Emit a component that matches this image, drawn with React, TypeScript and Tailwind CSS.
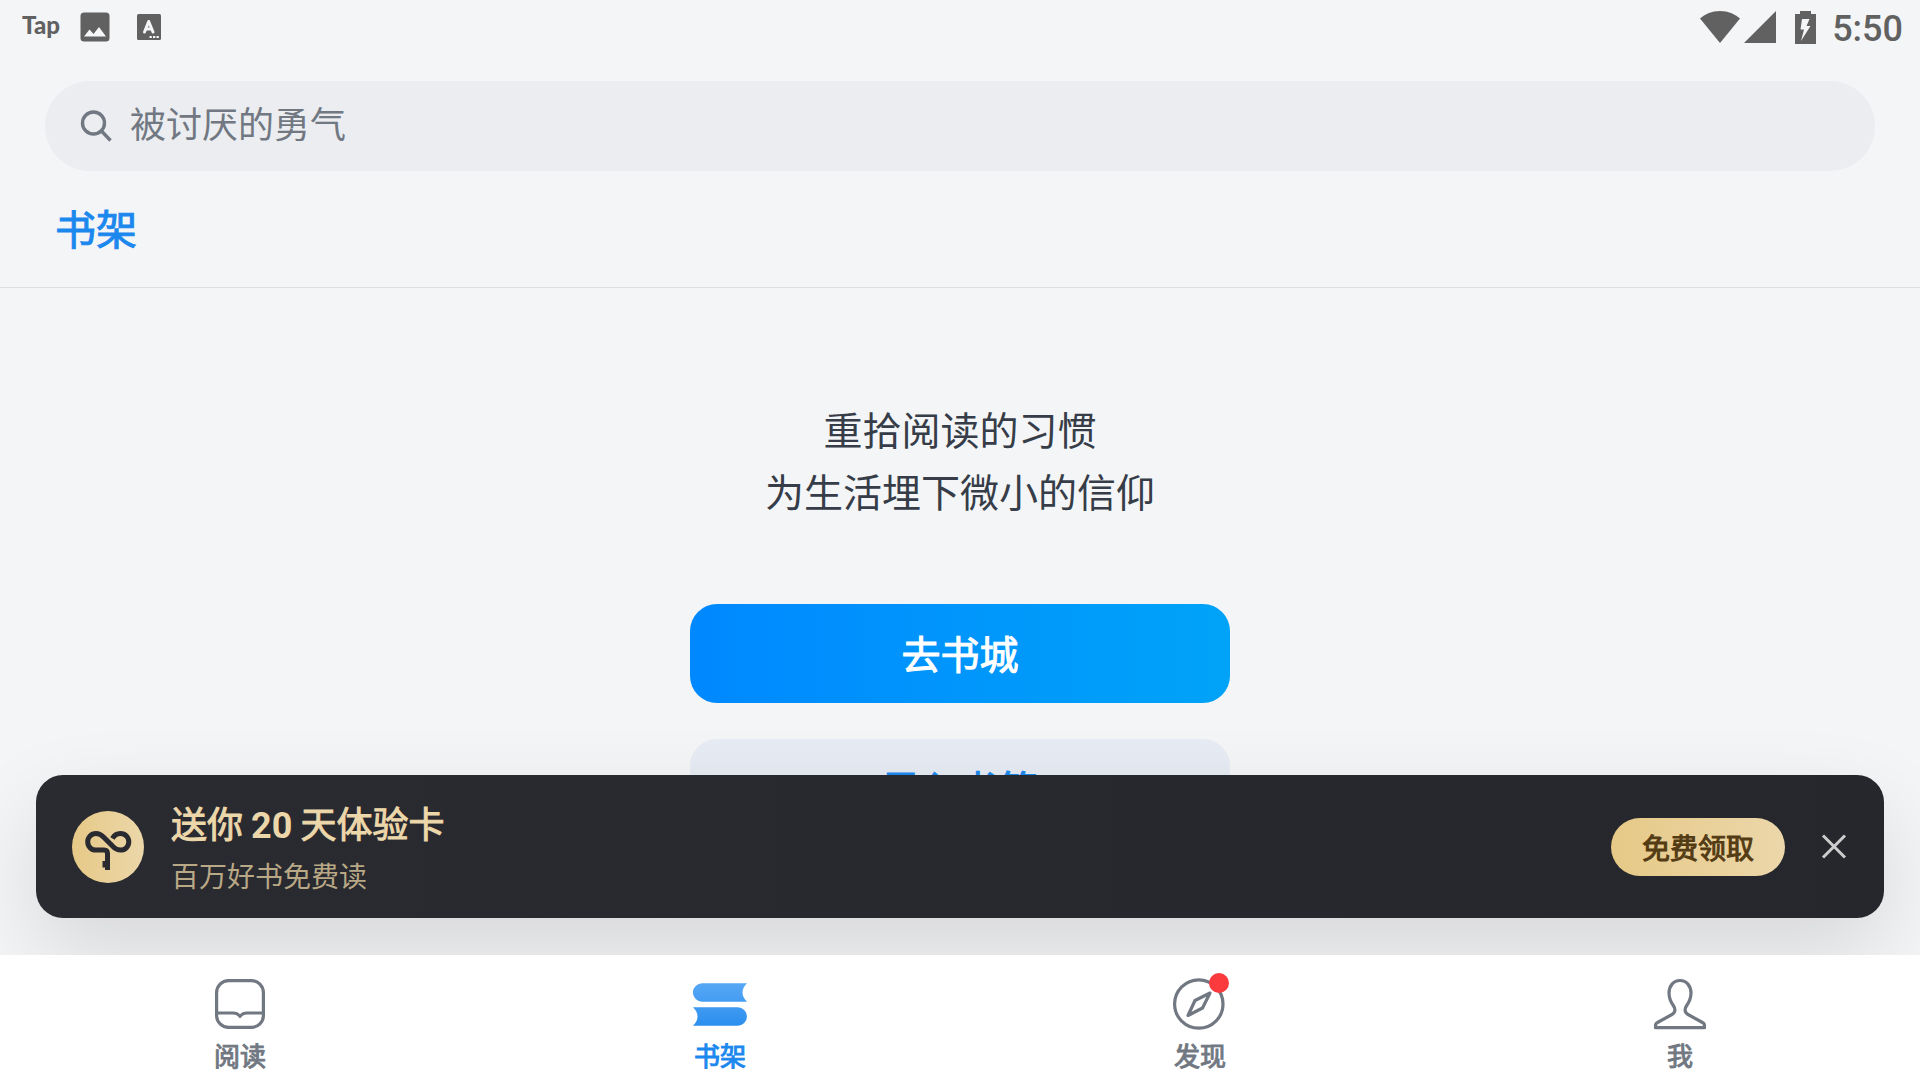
import { useState, type ReactNode } from "react";

interface NavItem {
  id: string;
  label: string;
  icon: ReactNode;
  badge?: boolean;
}

const ReadIcon = () => (
  <svg viewBox="0 0 54 54" className="h-[54px] w-[54px]" fill="none" stroke="currentColor" strokeWidth="3.2">
    <rect x="3.6" y="3.6" width="46.8" height="46.8" rx="12" />
    <path d="M3.6 36H20c3.5 0 5.5 1.2 7 3.5 1.5-2.3 3.5-3.5 7-3.5h16.4" strokeLinejoin="round" />
  </svg>
);

const ShelfIcon = () => (
  <svg viewBox="0 -1 54 54" className="h-[54px] w-[54px]">
    <defs>
      <linearGradient id="shelf" x1="0" y1="6" x2="0" y2="49" gradientUnits="userSpaceOnUse">
        <stop offset="0" stopColor="#56a7f5" />
        <stop offset="1" stopColor="#2b8eee" />
      </linearGradient>
    </defs>
    <path d="M9.2 5.3H54c-6 5.5-6 13 0 18.500H9.200a9.250 9.250 0 0 1 0-18.500z" fill="url(#shelf)" />
    <path d="M0 29.300h44.700a9.250 9.250 0 0 1 0 18.500H0c6-5.500 6-13 0-18.500z" fill="url(#shelf)" />
  </svg>
);

const CompassIcon = () => (
  <svg viewBox="0 0 54 54" className="h-[54px] w-[54px]" fill="none" stroke="currentColor" strokeWidth="3.2">
    <circle cx="25.800" cy="27" r="24.2" />
    <path d="M37 16 22 23.500 15 38.500l14.500-7.500z" strokeLinejoin="round" />
  </svg>
);

const ProfileIcon = () => (
  <svg viewBox="0 0 54 54" className="h-[54px] w-[54px]" fill="none" stroke="currentColor" strokeWidth="3.2" strokeLinejoin="round">
    <path d="M27 3.500c-6.500 0-11 5.500-11 12.500 0 5.500 1.800 9 4.300 12.500 2.200 3.200 2.500 7-1.300 9L4.500 45.500c-2 1-2 1.800-2 5.200h49c0-3.400 0-4.200-2-5.200L35 37.500c-3.800-2-3.500-5.800-1.300-9C36.200 25 38 21.500 38 16c0-7-4.500-12.500-11-12.500z" />
  </svg>
);

const navItems: NavItem[] = [
  { id: "read", label: "阅读", icon: <ReadIcon /> },
  { id: "shelf", label: "书架", icon: <ShelfIcon /> },
  { id: "discover", label: "发现", icon: <CompassIcon />, badge: true },
  { id: "me", label: "我", icon: <ProfileIcon /> },
];

const StatusBar = () => (
  <div className="flex h-[54px] items-center justify-between pr-[17px] pl-[22px] text-[#616161]">
    <div className="flex items-center">
      <span className="w-[58px] pb-[4px] font-[Lato,sans-serif] text-[24px] leading-[28px] font-black">Tap</span>
      <svg viewBox="0 0 30 30" className="h-[30px] w-[30px]" aria-hidden="true">
        <rect x="0.5" y="0.5" width="29" height="29" rx="3.5" fill="currentColor" />
        <path d="M4 24.500 9.500 17.500l4 4.500 5.500-7 7 9.500z" fill="#f4f6f8" />
      </svg>
      <svg viewBox="0 0 24 26" className="ml-[27px] h-[26px] w-[24px]" aria-hidden="true">
        <rect width="24" height="26" rx="1.5" fill="currentColor" />
        <path d="M7.500 18 11.700 7.500l4.300 10.500M9 15h5.500" fill="none" stroke="#f4f6f8" strokeWidth="3" strokeLinecap="round" strokeLinejoin="round" />
        <path d="M12.500 22h2.300v2h-2.300zM16 22h2.300v2H16zM19.500 22h2.300v2h-2.300z" fill="#f4f6f8" />
      </svg>
    </div>
    <div className="flex items-center">
      <svg viewBox="0 0 40 32" className="h-[32px] w-[40px]" fill="currentColor" aria-hidden="true">
        <path d="M20 32 0 7.500C5 3 12 0 20 0s15 3 20 7.500z" />
      </svg>
      <svg viewBox="0 0 32 32" className="ml-[4px] h-[32px] w-[32px]" fill="currentColor" aria-hidden="true">
        <path d="M32 0v32H0z" />
      </svg>
      <svg viewBox="0 0 21 33" className="ml-[19px] h-[33px] w-[21px]" fill="currentColor" aria-hidden="true">
        <path fillRule="evenodd" d="M5 0h11v3h5v30H0V3h5zM7 8 5.500 18.500H9L6 30l9.500-15h-4L14.500 8z" />
      </svg>
      <time className="ml-[16px] pt-[4px] font-[Roboto,sans-serif] text-[36px] leading-[40px] font-medium">5:50</time>
    </div>
  </div>
);

const SearchBar = () => (
  <label className="mx-[45px] mt-[27px] flex h-[90px] items-center rounded-full bg-[#ebedf1] pl-[35px] text-[#717882]">
    <svg viewBox="0 0 32 32" className="h-[32px] w-[32px]" fill="none" stroke="currentColor" strokeWidth="3.4" aria-hidden="true">
      <circle cx="13.500" cy="13" r="11" />
      <path d="m21 20.500 9.500 10" />
    </svg>
    <input
      type="search"
      aria-label="搜索"
      placeholder="被讨厌的勇气"
      className="ml-[18px] h-[60px] flex-1 bg-transparent pb-[8px] text-[36px] leading-[52px] outline-none placeholder:text-[#717882]"
    />
  </label>
);

const PromoBanner = ({ onClose }: { onClose: () => void }) => (
  <aside className="absolute inset-x-[36px] bottom-[37px] flex h-[143px] items-center rounded-[27px] bg-linear-to-r from-[#2a2b30] to-[#26272c] pr-[37px] pl-[36px] shadow-[0_36px_90px_rgba(0,0,0,0.12)]">
    <svg viewBox="0 0 72 72" className="h-[72px] w-[72px]" aria-hidden="true">
      <defs>
        <linearGradient id="coin" x1="0" x2="1">
          <stop offset="0" stopColor="#e6c987" />
          <stop offset="1" stopColor="#ecd7aa" />
        </linearGradient>
      </defs>
      <circle cx="36" cy="36" r="36" fill="url(#coin)" />
      <path
        d="M40.500 27.500c1.800-3.500 4.500-5 8-5 4.800 0 8.300 3.700 8.300 8.300s-3.500 8.300-8.300 8.300c-3.200 0-5.500-1.300-8-4L32 26.500c-2.500-2.700-4.800-4-8-4-4.800 0-8.300 3.700-8.300 8.300s3.500 8.300 8.300 8.300h8c2.500 0 3.500 1.200 3.500 3.500V59"
        fill="none" stroke="#2a2b30" strokeWidth="5"
      />
      <path d="M30.500 50h4v6.500h-4z" fill="#2a2b30" />
    </svg>
    <div className="ml-[27px] flex-1 pt-[2px]">
      <p className="text-[36px] leading-[50px] [-webkit-text-stroke:1px] text-[#ecd7aa]">
        送你 <span className="font-[Roboto,sans-serif] font-bold [-webkit-text-stroke:0px]">20</span> 天体验卡
      </p>
      <p className="text-[28px] leading-[48px] text-[#b9a886]">百万好书免费读</p>
    </div>
    <button type="button" className="h-[58px] rounded-full bg-linear-to-r from-[#e6c987] to-[#ecd7aa] px-[31px] text-[28px] leading-[40px] [-webkit-text-stroke:1px] text-[#533b14]">
      免费领取
    </button>
    <button type="button" aria-label="关闭" onClick={onClose} className="ml-[36px] text-[#cdcdce]">
      <svg viewBox="0 0 26 26" className="h-[26px] w-[26px]" fill="none" stroke="currentColor" strokeWidth="3">
        <path d="m2 1.500 22 22M24 1.500l-22 22" />
      </svg>
    </button>
  </aside>
);

const App = () => {
  const [activeTab, setActiveTab] = useState("shelf");
  const [showPromo, setShowPromo] = useState(true);

  return (
    <div className="flex h-screen flex-col overflow-hidden bg-[#f4f5f7] font-['Noto_Sans_CJK_SC',sans-serif]">
      <header className="border-b border-[#dcdee1] pb-[31px]">
        <StatusBar />
        <SearchBar />
        <h1 className="mt-[27px] ml-[55px] text-[41px] leading-[58px] [-webkit-text-stroke:1px] text-[#1c88ee]">书架</h1>
      </header>

      <main className="relative flex min-h-0 flex-1 flex-col overflow-hidden">
        <div className="flex flex-col items-center overflow-hidden pt-[109px]">
          <p className="text-center text-[39px] leading-[62px] text-[#363d48]">
            重拾阅读的习惯
            <br />
            为生活埋下微小的信仰
          </p>
          <button type="button" className="mt-[83px] h-[99px] w-[540px] shrink-0 rounded-[27px] bg-linear-to-r from-[#0088ff] to-[#00a3f8] pb-[4px] text-[39px] leading-[56px] [-webkit-text-stroke:1px] text-white">
            去书城
          </button>
          <button type="button" className="mt-[36px] h-[99px] w-[540px] shrink-0 rounded-[27px] bg-[#e7ecf4] pb-[4px] text-[39px] leading-[56px] [-webkit-text-stroke:1px] text-[#1c88ee]">
            导入书籍
          </button>
        </div>
        {showPromo && <PromoBanner onClose={() => setShowPromo(false)} />}
      </main>

      <nav className="flex h-[125px] shrink-0 bg-white">
        {navItems.map((item) => (
          <button
            key={item.id}
            type="button"
            onClick={() => setActiveTab(item.id)}
            className={`flex flex-1 flex-col items-center pt-[22px] text-[26px] leading-[38px] [-webkit-text-stroke:1px] ${
              activeTab === item.id ? "text-[#1c88ee]" : "text-[#717882]"
            }`}
          >
            <span className="relative">
              {item.icon}
              {item.badge && <span className="absolute -top-[4px] -right-[2px] h-[20px] w-[20px] rounded-full bg-[#fa3a3c]" />}
            </span>
            <span className="mt-[5px]">{item.label}</span>
          </button>
        ))}
      </nav>
    </div>
  );
};

export default App;
